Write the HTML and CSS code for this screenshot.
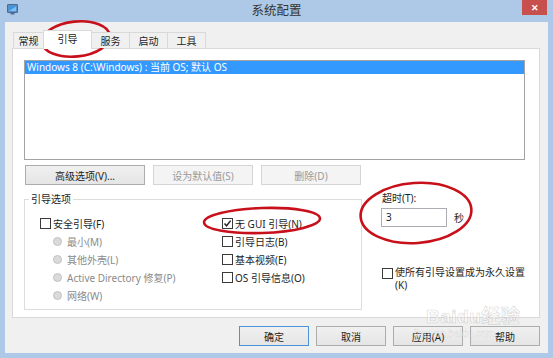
FILE: index.html
```html
<!DOCTYPE html>
<html lang="zh-CN">
<head>
<meta charset="utf-8">
<title>系统配置</title>
<link rel="stylesheet" href="styles.css">
</head>
<body>
<div class="window">
  <div class="titlebar">
    <div class="icon-cell">
      <svg class="app-icon" width="11" height="11" viewBox="0 0 11 11">
        <rect x="0.5" y="0.5" width="10" height="8" rx="0.5" fill="#6f8db3" stroke="#4d6990"/>
        <rect x="1.5" y="1.5" width="8" height="6" fill="#3f95e0"/>
        <path d="M2 7 L9 2.5 L9 7 Z" fill="#7fc0f5"/>
        <rect x="3.5" y="9" width="4" height="1.5" fill="#556f91"/>
      </svg>
    </div>
    <div class="title">系统配置</div>
    <div class="close-cell"><div class="close">✕</div></div>
  </div>

  <div class="client">
    <div class="tabs">
      <div class="tab tab-first">常规</div>
      <div class="tab tab-active">引导</div>
      <div class="tab">服务</div>
      <div class="tab">启动</div>
      <div class="tab">工具</div>
    </div>

    <div class="panel">
      <div class="listbox">
        <div class="list-row">Windows 8 (C:\Windows) : 当前 OS; 默认 OS</div>
      </div>

      <div class="btn-row">
        <div class="btn btn-wide">高级选项(V)...</div>
        <div class="btn btn-mid btn-disabled">设为默认值(S)</div>
        <div class="btn btn-mid btn-disabled">删除(D)</div>
      </div>

      <div class="lower">
        <div class="group">
          <div class="group-title">引导选项</div>
          <div class="group-body">
            <div class="col-left">
              <div class="opt"><span class="cb"></span>安全引导(F)</div>
              <div class="opt opt-indent muted"><span class="radio"></span>最小(M)</div>
              <div class="opt opt-indent muted"><span class="radio"></span>其他外壳(L)</div>
              <div class="opt opt-indent muted"><span class="radio"></span>Active Directory 修复(P)</div>
              <div class="opt opt-indent muted"><span class="radio"></span>网络(W)</div>
            </div>
            <div class="col-right">
              <div class="opt"><span class="cb cb-checked"><svg width="9" height="9" viewBox="0 0 9 9"><path d="M1.5 4.5 L3.6 6.8 L7.6 1.6" fill="none" stroke="#222" stroke-width="1.4"/></svg></span>无 GUI 引导(N)</div>
              <div class="opt"><span class="cb"></span>引导日志(B)</div>
              <div class="opt"><span class="cb"></span>基本视频(E)</div>
              <div class="opt"><span class="cb"></span>OS 引导信息(O)</div>
            </div>
          </div>
        </div>

        <div class="side">
          <div class="timeout-label">超时(T):</div>
          <div class="timeout-row">
            <div class="input">3</div>
            <span>秒</span>
          </div>
          <div class="perm">
            <span class="cb cb-perm"></span>
            <span class="perm-text">使所有引导设置成为永久设置(K)</span>
          </div>
        </div>
      </div>
    </div>

    <div class="footer">
      <div class="btn btn-foot btn-default">确定</div>
      <div class="btn btn-foot">取消</div>
      <div class="btn btn-foot">应用(A)</div>
      <div class="btn btn-foot">帮助</div>
    </div>
  </div>

  <svg class="annot" width="553" height="358" viewBox="0 0 553 358">
    <ellipse cx="76" cy="39" rx="34" ry="17.5" transform="rotate(-6 76 39)" fill="none" stroke="#c8101a" stroke-width="2.6"/>
    <ellipse cx="262" cy="220.5" rx="58" ry="12.5" transform="rotate(-2 262 220)" fill="none" stroke="#c8101a" stroke-width="2.6"/>
    <ellipse cx="416" cy="213" rx="55.5" ry="30" transform="rotate(-4 416 213)" fill="none" stroke="#c8101a" stroke-width="2.6"/>
  </svg>

  <div class="watermark">
    <div class="wm-logo">Baidu经验</div>
    <div class="wm-url">jingyan.baidu.com</div>
  </div>
</div>
</body>
</html>
```

FILE: styles.css
```css
* { box-sizing: border-box; }

body {
  margin: 0;
  font-family: "Noto Sans", "Noto Sans CJK SC", sans-serif;
  font-size: 10px;
  color: #1e1e1e;
}

.window {
  position: relative;
  width: 553px;
  height: 358px;
  background: #adc9e7;
  display: flex;
  flex-direction: column;
  overflow: hidden;
}

/* title bar */
.titlebar {
  height: 22px;
  display: grid;
  grid-template-columns: 1fr auto 1fr;
}
.icon-cell { padding: 4px 0 0 7px; }
.app-icon { display: block; }
.title {
  font-size: 12.5px;
  line-height: 22px;
  color: #333;
}
.close-cell {
  display: flex;
  justify-content: flex-end;
  align-items: flex-start;
  padding-right: 6px;
}
.close {
  width: 25px;
  height: 15px;
  background: #c7504c;
  color: #fff;
  font-size: 9px;
  font-weight: bold;
  display: flex;
  align-items: center;
  justify-content: center;
}

/* client area */
.client {
  flex: 1;
  margin: 0 5px 5px;
  background: #f0f0f0;
  padding: 8px 8px 0 7px;
  display: flex;
  flex-direction: column;
}

.tabs {
  display: flex;
  align-items: flex-end;
  height: 18px;
  margin-left: 1px;
  position: relative;
  z-index: 1;
}
.tab {
  width: 39px;
  height: 16px;
  margin-left: -1px;
  border: 1px solid #d9d9d9;
  border-bottom: none;
  background: #f0f0f0;
  display: flex;
  align-items: center;
  justify-content: center;
  line-height: 14px;
}
.tab-first { width: 31px; margin-left: 0; }
.tab-active {
  width: 49px;
  height: 19px;
  margin-bottom: -1px;
  background: #fff;
  padding-bottom: 2px;
  position: relative;
  z-index: 2;
}

.panel {
  width: 528px;
  height: 270px;
  background: #fff;
  border: 1px solid #d9d9d9;
  padding: 11px 14px 0 11px;
}

.listbox {
  height: 100px;
  border: 1px solid #a3a3a3;
  background: #fff;
}
.list-row {
  height: 13px;
  line-height: 13px;
  background: #3399ff;
  color: #fff;
  padding-left: 2px;
  white-space: nowrap;
}

.btn-row {
  display: flex;
  gap: 8px;
  margin-top: 5px;
  padding-left: 1px;
}
.btn {
  height: 20px;
  border: 1px solid #acacac;
  background: linear-gradient(#f0f0f0, #e5e5e5);
  display: flex;
  align-items: center;
  justify-content: center;
  color: #1e1e1e;
  white-space: nowrap;
}
.btn-wide { width: 120px; }
.btn-mid { width: 100px; }
.btn-disabled {
  background: #f4f4f4;
  border-color: #d5d5d5;
  color: #9a9a9a;
}

.lower {
  display: flex;
  gap: 19px;
  margin-top: 14px;
}

.group {
  width: 338px;
  height: 111px;
  border: 1px solid #dcdcdc;
}
.group-title {
  width: max-content;
  margin: -7px 0 0 4px;
  padding: 0 2px;
  background: #fff;
  line-height: 12px;
}
.group-body {
  display: flex;
  padding: 9px 0 0 15px;
}
.col-left { width: 182px; }

.opt {
  height: 18px;
  display: flex;
  align-items: center;
  white-space: nowrap;
}
.opt-indent { padding-left: 13px; }
.muted { color: #8a8a8a; }

.cb {
  width: 11px;
  height: 11px;
  border: 1px solid #3a3a3a;
  background: #fff;
  margin-right: 2px;
  flex-shrink: 0;
  display: flex;
  align-items: center;
  justify-content: center;
}
.cb svg { display: block; }
.radio {
  width: 9px;
  height: 9px;
  border-radius: 50%;
  background: #dadada;
  border: 1px solid #c2c2c2;
  margin-right: 5px;
  flex-shrink: 0;
}

.side {
  width: 144px;
  margin-top: -7px;
}
.timeout-label {
  line-height: 12px;
  padding-left: 1px;
}
.timeout-row {
  display: flex;
  align-items: center;
  gap: 7px;
  margin-top: 4px;
}
.input {
  width: 66px;
  height: 19px;
  border: 1px solid #abadb3;
  background: #fff;
  padding-left: 4px;
  line-height: 17px;
}
.perm {
  display: flex;
  align-items: flex-start;
  margin-top: 39px;
  padding-left: 1px;
}
.cb-perm { margin-top: 2px; }
.perm-text {
  width: 130px;
  line-height: 13px;
}

.footer {
  display: flex;
  justify-content: flex-end;
  gap: 7px;
  margin-top: 8px;
}
.btn-foot { width: 70px; }
.btn-default { border-color: #4a93d6; }

/* annotations drawn over the screenshot */
.annot {
  position: absolute;
  left: 0;
  top: 0;
  pointer-events: none;
}

.watermark {
  position: absolute;
  left: 426px;
  top: 306px;
  pointer-events: none;
  color: rgba(255, 255, 255, 0.5);
  -webkit-text-stroke: 0.6px rgba(150, 150, 150, 0.4);
  font-family: "Liberation Sans", "Noto Sans CJK SC", sans-serif;
}
.wm-logo {
  font-size: 19px;
  font-weight: bold;
  line-height: 22px;
  letter-spacing: 0.5px;
}
.wm-url {
  font-size: 10px;
  line-height: 12px;
  margin-left: -12px;
  -webkit-text-stroke: 0.3px rgba(150, 150, 150, 0.35);
}
```
